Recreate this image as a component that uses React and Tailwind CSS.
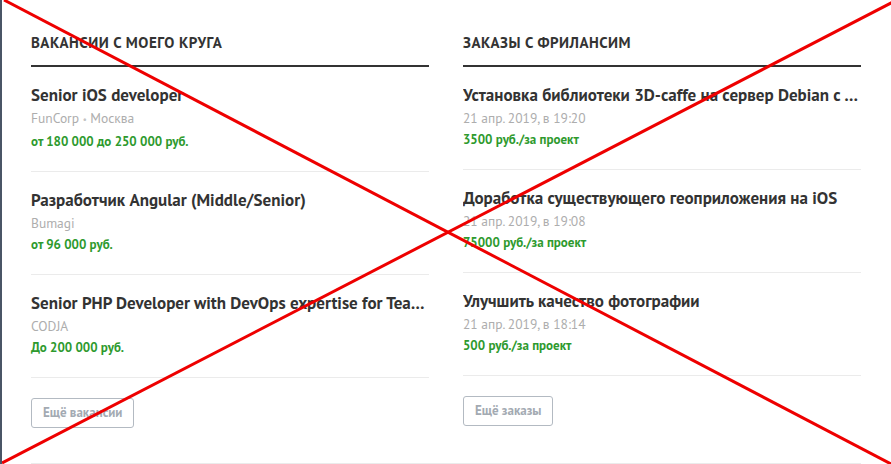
import React from 'react';

const vacancies = [
  { title: 'Senior iOS developer', company: 'FunCorp', city: 'Москва', salary: 'от 180 000 до 250 000 руб.' },
  { title: 'Разработчик Angular (Middle/Senior)', company: 'Bumagi', salary: 'от 96 000 руб.' },
  { title: 'Senior PHP Developer with DevOps expertise for Team Lead position', company: 'CODJA', salary: 'До 200 000 руб.' },
];

const orders = [
  { title: 'Установка библиотеки 3D-caffe на сервер Debian c GPU', date: '21 апр. 2019, в 19:20', price: '3500 руб./за проект' },
  { title: 'Доработка существующего геоприложения на iOS', date: '21 апр. 2019, в 19:08', price: '75000 руб./за проект' },
  { title: 'Улучшить качество фотографии', date: '21 апр. 2019, в 18:14', price: '500 руб./за проект' },
];

const Item = ({ title, meta, price }) => (
  <li className="pt-[18px] pb-[18px] border-b border-[#ebebeb]">
    <div className="text-[17px] leading-[21px] font-bold text-[#333] truncate">{title}</div>
    <div className="mt-[1px] text-[13.5px] leading-[22px] text-[#adadad]">{meta}</div>
    <div className="text-[13px] leading-[22px] font-bold text-[#2e9a2e]">{price}</div>
  </li>
);

const Column = ({ heading, button, children }) => (
  <section className="flex flex-col">
    <h2 className="pt-[33px] pb-[12px] text-[15px] leading-[20px] tracking-[0.5px] font-bold uppercase text-[#333] border-b-2 border-[#333]">
      {heading}
    </h2>
    <ul>{children}</ul>
    <div className="pt-[20px]">
      <button className="h-[30px] px-[11px] rounded-[3px] border border-[#b3bac2] text-[13px] font-bold text-[#a3aab2]">
        {button}
      </button>
    </div>
  </section>
);

export default function App() {
  return (
    <div
      className="relative w-[891px] h-[464px] overflow-hidden bg-white border-l-2 border-[#4a5566]"
      style={{ fontFamily: '"PT Sans", Roboto, "Liberation Sans", sans-serif' }}
    >
      <div className="pl-[29px] pr-[30px]">
        <div className="grid grid-cols-[398px_398px] gap-x-[34px] pb-[35px] border-b border-[#ebebeb]">
          <Column heading="Вакансии с моего круга" button="Ещё вакансии">
            {vacancies.map((v) => (
              <Item
                key={v.title}
                title={v.title}
                meta={
                  v.city ? (
                    <span>
                      {v.company} <span className="text-[9px] align-middle text-[#c4c4c4]">•</span> {v.city}
                    </span>
                  ) : (
                    v.company
                  )
                }
                price={v.salary}
              />
            ))}
          </Column>
          <Column heading="Заказы с Фрилансим" button="Ещё заказы">
            {orders.map((o) => (
              <Item key={o.title} title={o.title} meta={o.date} price={o.price} />
            ))}
          </Column>
        </div>
      </div>

      <svg className="absolute inset-0 pointer-events-none" width="891" height="464" viewBox="0 0 891 464">
        <line x1="2" y1="0" x2="891" y2="465" stroke="#ee0000" strokeWidth="3" />
        <line x1="891" y1="2" x2="0" y2="463" stroke="#ee0000" strokeWidth="3" />
      </svg>
    </div>
  );
}
